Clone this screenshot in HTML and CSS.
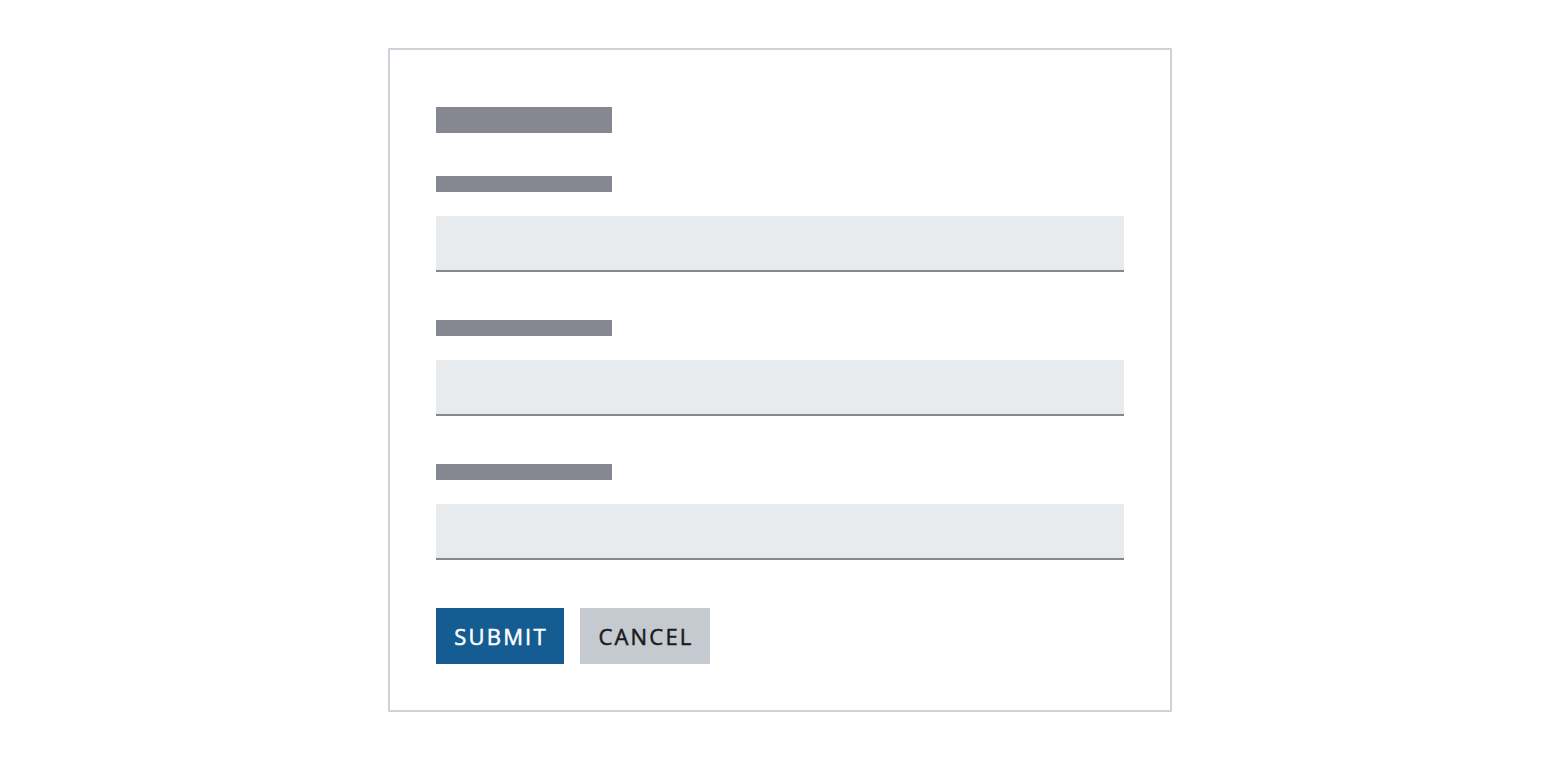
FILE: index.html
```html
<!DOCTYPE html>
<html lang="en">
<head>
<meta charset="utf-8">
<title>Form</title>
<link rel="stylesheet" href="styles.css">
</head>
<body>
<div class="page">
  <form class="card">
    <div class="title-bar"></div>
    <div class="field">
      <div class="label-bar"></div>
      <div class="input"></div>
    </div>
    <div class="field">
      <div class="label-bar"></div>
      <div class="input"></div>
    </div>
    <div class="field">
      <div class="label-bar"></div>
      <div class="input"></div>
    </div>
    <div class="actions">
      <button type="button" class="btn btn-primary">SUBMIT</button>
      <button type="button" class="btn btn-secondary">CANCEL</button>
    </div>
  </form>
</div>
</body>
</html>
```
FILE: styles.css
```css
* { box-sizing: border-box; }
html, body { margin: 0; padding: 0; background: #ffffff; }
body { font-family: "Open Sans", "Liberation Sans", sans-serif; }
.page {
  display: flex;
  justify-content: center;
  padding-top: 48px;
}
.card {
  width: 784px;
  border: 2px solid #d0d4da;
  padding: 57px 46px 46px 46px;
  display: flex;
  flex-direction: column;
}
.title-bar {
  width: 176px;
  height: 26px;
  background: #868891;
}
.field {
  display: flex;
  flex-direction: column;
  gap: 24px;
  margin-top: 43px;
}
.field + .field { margin-top: 48px; }
.label-bar {
  width: 176px;
  height: 16px;
  background: #868891;
}
.input {
  height: 56px;
  background: #e8ebee;
  border-bottom: 2px solid #868891;
}
.actions {
  display: flex;
  gap: 16px;
  margin-top: 48px;
}
.btn {
  height: 56px;
  border: none;
  font-family: "Open Sans", "Liberation Sans", sans-serif;
  font-size: 22px;
  font-weight: 400;
  letter-spacing: 2.2px;
  -webkit-text-stroke: 0.5px currentColor;
  padding: 0 0 0 2px;
  line-height: 1;
  text-align: center;
  cursor: pointer;
}
.btn-primary { background: #155c93; color: #ffffff; width: 128px; }
.btn-secondary { background: #c5c9d0; color: #1b1b1b; width: 130px; }
```
